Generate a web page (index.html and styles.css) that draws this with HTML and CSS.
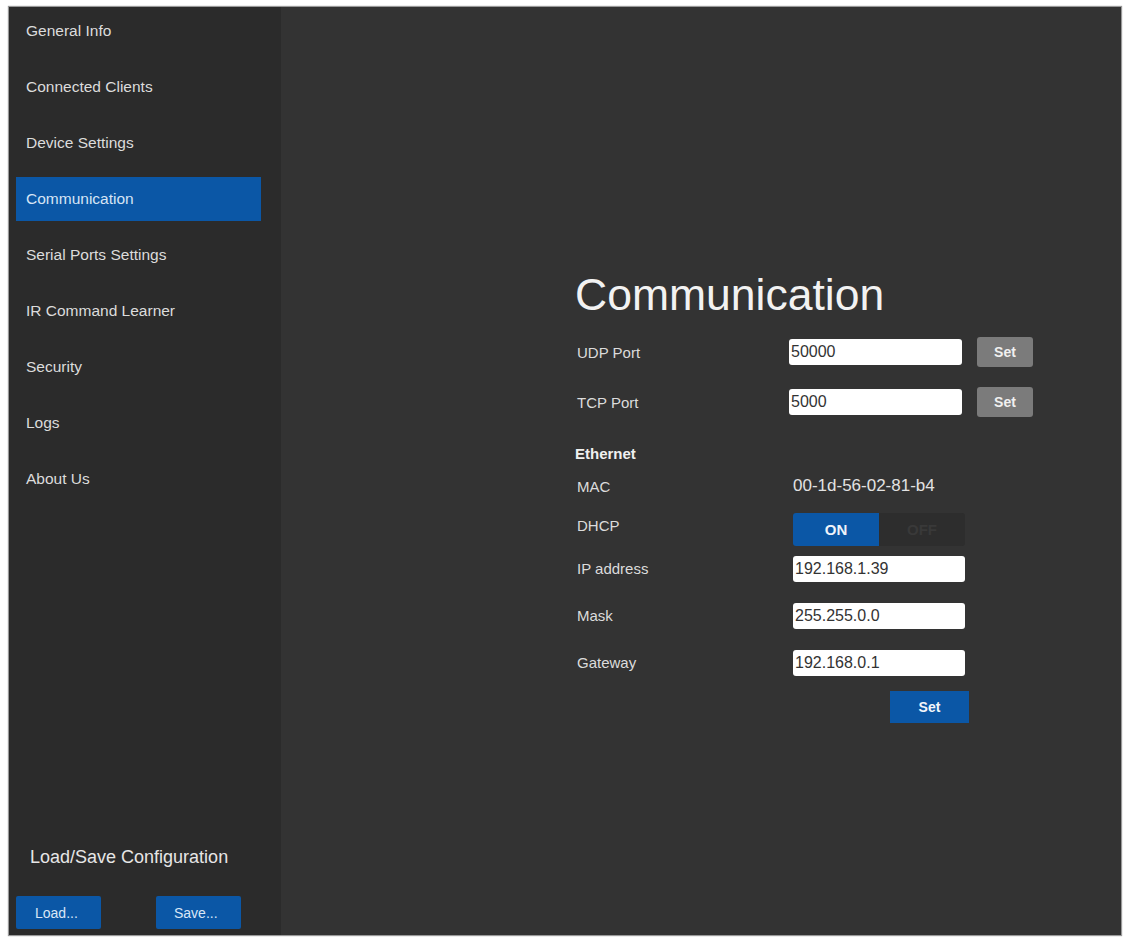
FILE: index.html
```html
<!DOCTYPE html>
<html lang="en">
  <head>
    <meta charset="UTF-8" />
    <meta name="viewport" content="width=device-width, initial-scale=1.0" />
    <title>Communication</title>
    <link rel="stylesheet" href="styles.css">
  </head>
  <body>
    <div class="app">
      <!-- Menu latéral -->
      <div class="sidebar">
        <ul class="nav">
          <li>General Info</li>
          <li>Connected Clients</li>
          <li>Device Settings</li>
          <li class="active">Communication</li>
          <li>Serial Ports Settings</li>
          <li>IR Command Learner</li>
          <li>Security</li>
          <li>Logs</li>
          <li>About Us</li>
        </ul>
        <div class="config">
          <div class="config-title">Load/Save Configuration</div>
          <div class="config-buttons">
            <button class="btn-blue btn-load">Load...</button>
            <button class="btn-blue btn-save">Save...</button>
          </div>
        </div>
      </div>

      <!-- Contenu -->
      <div class="main">
        <h1>Communication</h1>

        <div class="port-row">
          <label>UDP Port</label>
          <input type="text" value="50000" />
          <button class="btn-gray">Set</button>
        </div>
        <div class="port-row">
          <label>TCP Port</label>
          <input type="text" value="5000" />
          <button class="btn-gray">Set</button>
        </div>

        <div class="section-title">Ethernet</div>

        <div class="eth-row mac-row">
          <label>MAC</label>
          <span class="mac">00-1d-56-02-81-b4</span>
        </div>
        <div class="eth-row dhcp-row">
          <label>DHCP</label>
          <div class="toggle">
            <span class="on">ON</span>
            <span class="off">OFF</span>
          </div>
        </div>
        <div class="eth-row">
          <label>IP address</label>
          <input type="text" value="192.168.1.39" />
        </div>
        <div class="eth-row">
          <label>Mask</label>
          <input type="text" value="255.255.0.0" />
        </div>
        <div class="eth-row">
          <label>Gateway</label>
          <input type="text" value="192.168.0.1" />
        </div>
        <div class="eth-submit">
          <button class="btn-blue btn-set">Set</button>
        </div>
      </div>
    </div>
  </body>
</html>
```

FILE: styles.css
```css
body {
  margin: 0;
  padding: 7px 5px 4px 9px;
  background-color: #fff;
  font-family: "Liberation Sans", Arial, sans-serif;
}

.app {
  display: flex;
  width: 1112px;
  height: 928px;
  background-color: #333333;
  box-shadow: 0 0 1px 1px #999;
}

/* Menu latéral */
.sidebar {
  width: 272px;
  background-color: #2b2b2b;
  display: flex;
  flex-direction: column;
}

.nav {
  list-style: none;
  margin: 0;
  padding: 2px 0 0 0;
}

.nav li {
  height: 44px;
  line-height: 44px;
  margin: 0 20px 12px 7px;
  padding-left: 10px;
  font-size: 15.5px;
  color: #dcdcdc;
}

.nav li.active {
  background-color: #0b57a6;
  color: #d6e4f5;
}

.config {
  margin-top: auto;
  padding: 0 0 6px 7px;
}

.config-title {
  font-size: 18px;
  color: #e6e6e6;
  padding-left: 14px;
  margin-bottom: 28px;
}

.config-buttons {
  display: flex;
  gap: 55px;
}

.btn-blue {
  background-color: #0b57a6;
  color: #d9e6f6;
  border: none;
  font-family: "Liberation Sans", Arial, sans-serif;
  font-size: 14px;
  padding: 0;
}

.btn-load,
.btn-save {
  width: 85px;
  height: 33px;
  border-radius: 2px;
}

.btn-load {
  text-align: left;
  padding-left: 19px;
}

.btn-save {
  text-align: left;
  padding-left: 18px;
}

/* Contenu */
.main {
  flex: 1;
  padding: 263px 0 0 294px;
  color: #dcdcdc;
}

.main h1 {
  margin: 0 0 7px 0;
  height: 50px;
  line-height: 50px;
  font-size: 44.5px;
  font-weight: normal;
  color: #f2f2f2;
}

.main label {
  font-size: 15px;
  padding-left: 2px;
}

.main input {
  box-sizing: border-box;
  height: 26px;
  border: none;
  border-radius: 3px;
  padding: 0 2px;
  font-family: "Liberation Sans", Arial, sans-serif;
  font-size: 16px;
  color: #333;
  background: #fff;
}

.port-row {
  display: grid;
  grid-template-columns: 199px 173px 56px;
  column-gap: 15px;
  align-items: center;
  height: 50px;
}

.btn-gray {
  height: 30px;
  background-color: #7b7b7b;
  color: #f0f0f0;
  border: none;
  border-radius: 3px;
  font-family: "Liberation Sans", Arial, sans-serif;
  font-size: 14px;
  font-weight: bold;
}

.section-title {
  margin-top: 15px;
  height: 24px;
  line-height: 24px;
  font-size: 15px;
  font-weight: bold;
  color: #f0f0f0;
}

.eth-row {
  display: grid;
  grid-template-columns: 218px 172px;
  align-items: center;
  height: 47px;
}

.mac-row {
  height: 40px;
}

.mac {
  font-size: 17px;
  color: #e2e2e2;
}

.dhcp-row {
  height: 39px;
  align-items: start;
}

.dhcp-row label {
  padding-top: 11px;
}

.toggle {
  display: flex;
  height: 33px;
  margin-top: 7px;
  border-radius: 3px;
  overflow: hidden;
}

.toggle span {
  flex: 1;
  text-align: center;
  line-height: 33px;
  font-size: 15px;
  font-weight: bold;
}

.toggle .on {
  background-color: #0b57a6;
  color: #eef3fa;
}

.toggle .off {
  background-color: #2d2d2d;
  color: #393939;
}

.eth-submit {
  padding: 5px 0 0 315px;
}

.btn-set {
  width: 79px;
  height: 32px;
  font-weight: bold;
  color: #f2f6fb;
}
```
